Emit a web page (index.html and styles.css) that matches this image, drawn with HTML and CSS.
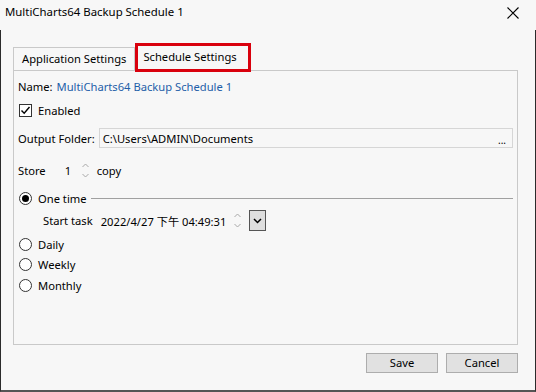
FILE: index.html
```html
<!DOCTYPE html>
<html lang="en">
<head>
    <meta charset="UTF-8">
    <title>MultiCharts64 Backup Schedule 1</title>
    <link rel="stylesheet" href="styles.css">
</head>
<body>
<div class="window">
    <div class="titlebar">
        <span class="title">MultiCharts64 Backup Schedule 1</span>
        <svg class="close" width="12" height="12" viewBox="0 0 12 12">
            <path d="M0.5 0.5 L11.5 11.5 M11.5 0.5 L0.5 11.5" stroke="#000" stroke-width="1.1" fill="none"/>
        </svg>
    </div>
    <div class="frame">
        <div class="tabs">
            <div class="tab">Application Settings</div>
            <div class="tab active">Schedule Settings</div>
        </div>
        <div class="panel">
            <div class="row row-name">
                <span class="label">Name:</span>
                <span class="name-value">MultiCharts64 Backup Schedule 1</span>
            </div>
            <div class="row row-enabled">
                <span class="checkbox">
                    <svg width="11" height="11" viewBox="0 0 11 11">
                        <path d="M1.5 5.5 L4.2 8.3 L9.5 2" stroke="#000" stroke-width="1.4" fill="none"/>
                    </svg>
                </span>
                <span>Enabled</span>
            </div>
            <div class="row row-folder">
                <span class="label">Output Folder:</span>
                <div class="textbox">
                    <span>C:\Users\ADMIN\Documents</span>
                    <span class="browse">...</span>
                </div>
            </div>
            <div class="row row-store">
                <span class="label">Store</span>
                <span class="count">1</span>
                <span class="spinner">
                    <svg width="7" height="15" viewBox="0 0 7 15">
                        <path d="M0.5 4 L3.5 1 L6.5 4 M0.5 11 L3.5 14 L6.5 11" stroke="#a8a8a8" stroke-width="1" fill="none"/>
                    </svg>
                </span>
                <span>copy</span>
            </div>
            <div class="row row-onetime">
                <span class="radio checked"></span>
                <span>One time</span>
                <span class="rule"></span>
            </div>
            <div class="row row-start">
                <span class="label">Start task</span>
                <span class="datetime">2022/4/27 下午 04:49:31</span>
                <span class="spinner">
                    <svg width="7" height="15" viewBox="0 0 7 15">
                        <path d="M0.5 4 L3.5 1 L6.5 4 M0.5 11 L3.5 14 L6.5 11" stroke="#a8a8a8" stroke-width="1" fill="none"/>
                    </svg>
                </span>
                <span class="dropdown">
                    <svg width="9" height="6" viewBox="0 0 9 6">
                        <path d="M1 1 L4.5 4.5 L8 1" stroke="#000" stroke-width="1.5" fill="none"/>
                    </svg>
                </span>
            </div>
            <div class="row row-daily">
                <span class="radio"></span>
                <span>Daily</span>
            </div>
            <div class="row row-weekly">
                <span class="radio"></span>
                <span>Weekly</span>
            </div>
            <div class="row row-monthly">
                <span class="radio"></span>
                <span>Monthly</span>
            </div>
        </div>
        <div class="buttons">
            <div class="button">Save</div>
            <div class="button">Cancel</div>
        </div>
    </div>
</div>
</body>
</html>
```

FILE: styles.css
```css
html, body {
    margin: 0;
    padding: 0;
}

body {
    width: 536px;
    height: 392px;
    overflow: hidden;
    background-color: #f7f7f7;
    font-family: "Noto Sans", "Noto Sans CJK TC", sans-serif;
    font-size: 11.2px;
    color: #000;
}

.window {
    width: 536px;
    height: 392px;
    display: flex;
    flex-direction: column;
    background-color: #f7f7f7;
}

.titlebar {
    height: 30px;
    display: flex;
    align-items: flex-start;
    justify-content: space-between;
    padding: 3px 0 0 5px;
    box-sizing: border-box;
}

.title {
    font-size: 11.4px;
    line-height: 18px;
}

.close {
    margin: 4px 17px 0 0;
}

.frame {
    flex: 1;
    border-left: 1px solid #2b2b2b;
    border-right: 1px solid #2b2b2b;
    border-bottom: 2px solid #555;
    display: flex;
    flex-direction: column;
}

/* tab strip */
.tabs {
    display: flex;
    align-items: flex-end;
    height: 40px;
    padding-left: 12px;
}

.tab {
    height: 23px;
    line-height: 22px;
    padding: 0 8px 0 8px;
    border: 1px solid #c9c9c9;
    border-bottom: none;
    box-sizing: border-box;
}

.tab.active {
    height: 29px;
    line-height: 22px;
    margin-bottom: -2px;
    border: 3px solid #d9000d;
    padding: 0 11px 0 5px;
    background-color: #f7f7f7;
    position: relative;
    z-index: 1;
}

.panel {
    margin-left: 12px;
    width: 505px;
    height: 275px;
    border: 1px solid #c9c9c9;
    box-sizing: border-box;
    padding: 5px 4px 0 4px;
    display: flex;
    flex-direction: column;
}

.row {
    display: flex;
    align-items: center;
    height: 20px;
    white-space: nowrap;
}

.row-enabled { margin-top: 4px; }
.row-folder { margin-top: 8px; }
.row-store { margin-top: 12px; }
.row-onetime { margin-top: 8px; }
.row-start { margin-top: 2px; height: 21px; padding-left: 25px; }
.row-daily { margin-top: 3px; }
.row-weekly { margin-top: 0; }
.row-monthly { margin-top: 1px; }

.label {
    margin-right: 4px;
}

.name-value {
    color: #1e5ea8;
}

.checkbox {
    width: 11px;
    height: 11px;
    border: 1px solid #333;
    margin: 0 6px 0 1px;
    display: flex;
    align-items: center;
    justify-content: center;
    background-color: #fff;
}

.textbox {
    flex: 1;
    height: 20px;
    border: 1px solid #d6d6d6;
    box-sizing: border-box;
    display: flex;
    align-items: center;
    justify-content: space-between;
    padding: 0 6px 0 3px;
}

.browse {
    font-size: 10px;
    margin-top: 4px;
}

.count {
    margin-left: 15px;
    width: 17px;
}

.spinner {
    display: flex;
    align-items: center;
    width: 15px;
}

.radio {
    width: 11px;
    height: 11px;
    border: 1px solid #333;
    border-radius: 50%;
    margin: 0 6px 0 1px;
    background-color: #fff;
    position: relative;
    flex: none;
}

.radio.checked::after {
    content: "";
    position: absolute;
    left: 2px;
    top: 2px;
    width: 7px;
    height: 7px;
    border-radius: 50%;
    background-color: #000;
}

.rule {
    flex: 1;
    height: 1px;
    background-color: #a0a0a0;
    margin: 0 0 0 4px;
}

.datetime {
    margin-left: 4px;
    margin-right: 8px;
}

.dropdown {
    width: 15px;
    height: 19px;
    border: 1px solid #555;
    background-color: #dedede;
    display: flex;
    align-items: center;
    justify-content: center;
}

/* dialog buttons */
.buttons {
    display: flex;
    justify-content: flex-end;
    gap: 8px;
    padding: 8px 17px 0 0;
}

.button {
    width: 72px;
    height: 20px;
    line-height: 18px;
    text-align: center;
    border: 1px solid #adadad;
    background-color: #e1e1e1;
    box-sizing: border-box;
}
```
